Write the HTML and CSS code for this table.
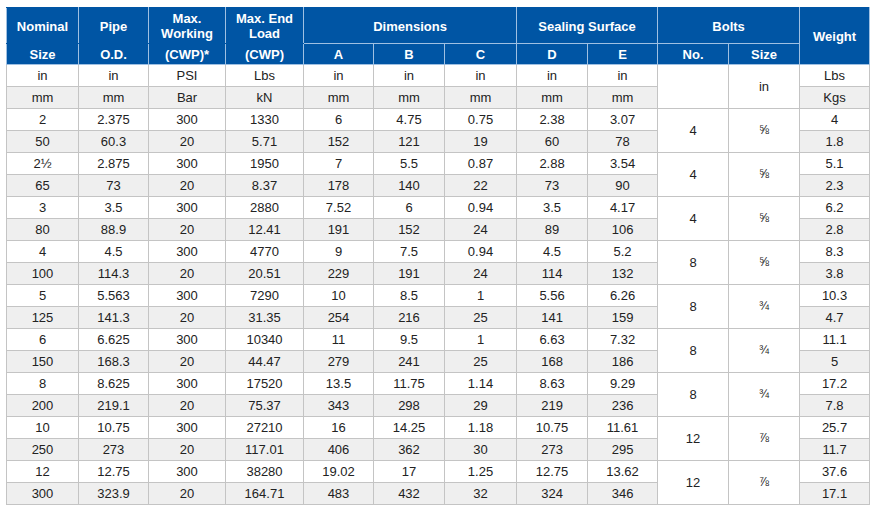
FILE: index.html
```html
<!DOCTYPE html>
<html>
<head>
<meta charset="utf-8">
<link rel="stylesheet" href="styles.css">
</head>
<body>
<div class="wrap">
<table class="spec">
<colgroup>
<col class="c72"><col class="c70"><col class="c77"><col class="c78"><col class="c70"><col class="c71"><col class="c72"><col class="c71"><col class="c70"><col class="c71"><col class="c71"><col class="c70">
</colgroup>
<thead>
<tr class="h1">
<th class="open">Nominal</th><th class="open">Pipe</th><th class="open">Max. Working</th><th class="open">Max. End Load</th>
<th colspan="3">Dimensions</th><th colspan="2">Sealing Surface</th><th colspan="2">Bolts</th><th rowspan="2">Weight</th>
</tr>
<tr class="h2">
<th class="cont">Size</th><th class="cont">O.D.</th><th class="cont">(CWP)*</th><th class="cont">(CWP)</th>
<th>A</th><th>B</th><th>C</th><th>D</th><th>E</th><th>No.</th><th>Size</th>
</tr>
</thead>
<tbody>
<tr><td>in</td><td>in</td><td>PSI</td><td>Lbs</td><td>in</td><td>in</td><td>in</td><td>in</td><td>in</td><td rowspan="2" class="span"></td><td rowspan="2" class="span">in</td><td>Lbs</td></tr>
<tr class="alt"><td>mm</td><td>mm</td><td>Bar</td><td>kN</td><td>mm</td><td>mm</td><td>mm</td><td>mm</td><td>mm</td><td>Kgs</td></tr>

<tr><td>2</td><td>2.375</td><td>300</td><td>1330</td><td>6</td><td>4.75</td><td>0.75</td><td>2.38</td><td>3.07</td><td rowspan="2" class="span">4</td><td rowspan="2" class="span frac">⅝</td><td>4</td></tr>
<tr class="alt"><td>50</td><td>60.3</td><td>20</td><td>5.71</td><td>152</td><td>121</td><td>19</td><td>60</td><td>78</td><td>1.8</td></tr>

<tr><td>2½</td><td>2.875</td><td>300</td><td>1950</td><td>7</td><td>5.5</td><td>0.87</td><td>2.88</td><td>3.54</td><td rowspan="2" class="span">4</td><td rowspan="2" class="span frac">⅝</td><td>5.1</td></tr>
<tr class="alt"><td>65</td><td>73</td><td>20</td><td>8.37</td><td>178</td><td>140</td><td>22</td><td>73</td><td>90</td><td>2.3</td></tr>

<tr><td>3</td><td>3.5</td><td>300</td><td>2880</td><td>7.52</td><td>6</td><td>0.94</td><td>3.5</td><td>4.17</td><td rowspan="2" class="span">4</td><td rowspan="2" class="span frac">⅝</td><td>6.2</td></tr>
<tr class="alt"><td>80</td><td>88.9</td><td>20</td><td>12.41</td><td>191</td><td>152</td><td>24</td><td>89</td><td>106</td><td>2.8</td></tr>

<tr><td>4</td><td>4.5</td><td>300</td><td>4770</td><td>9</td><td>7.5</td><td>0.94</td><td>4.5</td><td>5.2</td><td rowspan="2" class="span">8</td><td rowspan="2" class="span frac">⅝</td><td>8.3</td></tr>
<tr class="alt"><td>100</td><td>114.3</td><td>20</td><td>20.51</td><td>229</td><td>191</td><td>24</td><td>114</td><td>132</td><td>3.8</td></tr>

<tr><td>5</td><td>5.563</td><td>300</td><td>7290</td><td>10</td><td>8.5</td><td>1</td><td>5.56</td><td>6.26</td><td rowspan="2" class="span">8</td><td rowspan="2" class="span frac">¾</td><td>10.3</td></tr>
<tr class="alt"><td>125</td><td>141.3</td><td>20</td><td>31.35</td><td>254</td><td>216</td><td>25</td><td>141</td><td>159</td><td>4.7</td></tr>

<tr><td>6</td><td>6.625</td><td>300</td><td>10340</td><td>11</td><td>9.5</td><td>1</td><td>6.63</td><td>7.32</td><td rowspan="2" class="span">8</td><td rowspan="2" class="span frac">¾</td><td>11.1</td></tr>
<tr class="alt"><td>150</td><td>168.3</td><td>20</td><td>44.47</td><td>279</td><td>241</td><td>25</td><td>168</td><td>186</td><td>5</td></tr>

<tr><td>8</td><td>8.625</td><td>300</td><td>17520</td><td>13.5</td><td>11.75</td><td>1.14</td><td>8.63</td><td>9.29</td><td rowspan="2" class="span">8</td><td rowspan="2" class="span frac">¾</td><td>17.2</td></tr>
<tr class="alt"><td>200</td><td>219.1</td><td>20</td><td>75.37</td><td>343</td><td>298</td><td>29</td><td>219</td><td>236</td><td>7.8</td></tr>

<tr><td>10</td><td>10.75</td><td>300</td><td>27210</td><td>16</td><td>14.25</td><td>1.18</td><td>10.75</td><td>11.61</td><td rowspan="2" class="span">12</td><td rowspan="2" class="span frac">⅞</td><td>25.7</td></tr>
<tr class="alt"><td>250</td><td>273</td><td>20</td><td>117.01</td><td>406</td><td>362</td><td>30</td><td>273</td><td>295</td><td>11.7</td></tr>

<tr><td>12</td><td>12.75</td><td>300</td><td>38280</td><td>19.02</td><td>17</td><td>1.25</td><td>12.75</td><td>13.62</td><td rowspan="2" class="span">12</td><td rowspan="2" class="span frac">⅞</td><td>37.6</td></tr>
<tr class="alt"><td>300</td><td>323.9</td><td>20</td><td>164.71</td><td>483</td><td>432</td><td>32</td><td>324</td><td>346</td><td>17.1</td></tr>
</tbody>
</table>
</div>
</body>
</html>
```

FILE: styles.css
```css
html, body {
  margin: 0;
  padding: 0;
  background: #ffffff;
}

.wrap {
  padding: 7px 0 0 6px;
}

.spec {
  border-collapse: collapse;
  table-layout: fixed;
  width: 864px;
  font-family: "Liberation Sans", Arial, sans-serif;
  font-size: 13px;
  color: #222222;
}

.c72 { width: 72px; }
.c70 { width: 70px; }
.c71 { width: 71px; }
.c77 { width: 77px; }
.c78 { width: 78px; }

.spec th {
  background: #0055a4;
  color: #ffffff;
  font-weight: bold;
  text-align: center;
  vertical-align: middle;
  border: 1px solid #9fc0e2;
  padding: 0 2px;
  line-height: 15px;
}

.spec thead tr:first-child th {
  border-top-color: #0055a4;
}

.spec .h1 th {
  height: 34px;
  padding-top: 1px;
}

.spec .h2 th {
  height: 20px;
}

.spec th.open {
  border-bottom-color: #0055a4;
}

.spec th.cont {
  border-top-color: #0055a4;
}

.spec td {
  height: 21px;
  padding: 0;
  text-align: center;
  vertical-align: middle;
  border: 1px solid #c4c4c4;
  line-height: 15px;
  background: #ffffff;
}

.spec tr.alt td {
  background: #efefef;
}

.spec td.span {
  background: #ffffff;
}

.spec td.frac {
  font-size: 12px;
}
```
